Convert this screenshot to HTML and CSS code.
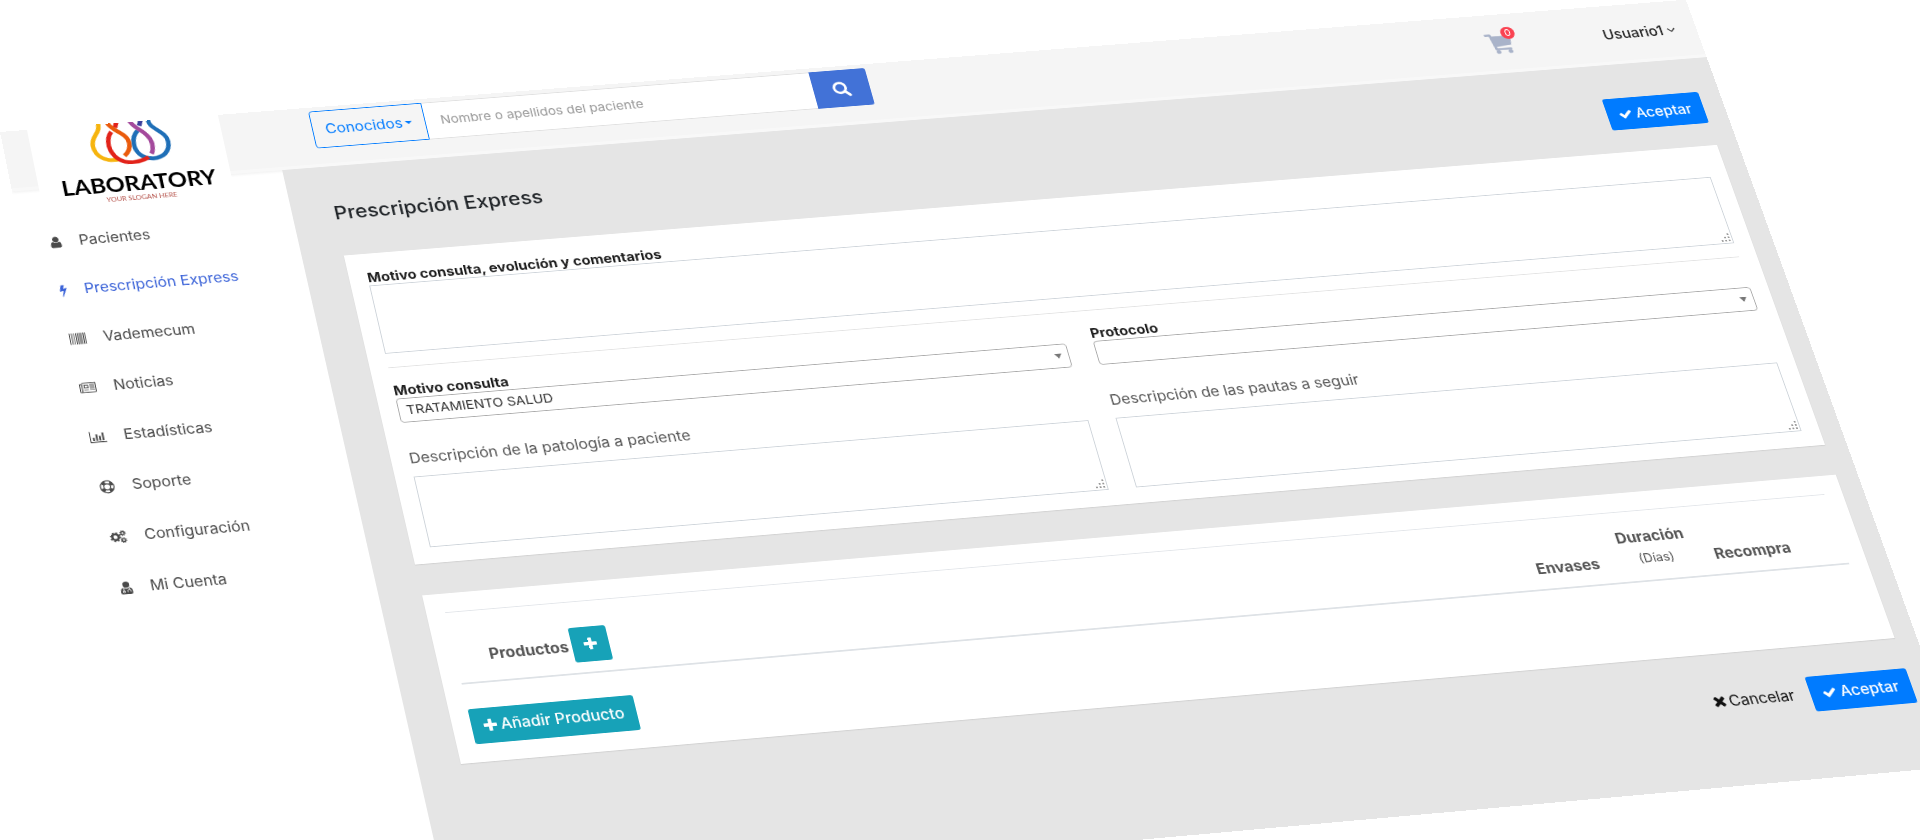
FILE: index.html
```html
<!DOCTYPE html>
<html lang="es">
<head>
    <meta charset="UTF-8">
    <meta name="viewport" content="width=device-width, initial-scale=1.0">
    <title>Prescripción Express</title>
    <link rel="stylesheet" href="styles.css">
</head>
<body>
<!-- iconos -->
<svg class="sprite" aria-hidden="true">
    <symbol id="i-user" viewBox="190 128 1412 1536"><path d="M1536 1399q0 109-62.5 187t-150.5 78h-854q-88 0-150.5-78t-62.5-187q0-85 8.5-160.5t31.5-152 58.5-131 94-89 134.5-34.5q131 128 313 128t313-128q76 0 134.5 34.5t94 89 58.5 131 31.5 152 8.5 160.5zm-256-887q0 159-112.5 271.5t-271.5 112.5-271.5-112.5-112.5-271.5 112.5-271.5 271.5-112.5 271.5 112.5 112.5 271.5z"/></symbol>
    <symbol id="i-bolt" viewBox="440 0 912 1792"><path d="M1333 566q18 20 7 44l-540 1157q-13 25-42 25-4 0-14-2-17-5-25.5-19t-4.5-30l197-808-406 101q-4 1-12 1-18 0-31-11-18-15-13-39l201-825q4-14 16-23t28-9h328q19 0 32 12.5t13 29.5q0 8-5 18l-171 463 396-98q8-2 12-2 19 0 34 15z"/></symbol>
    <symbol id="i-barcode" viewBox="0 0 18 14"><path d="M0 0h1v14H0zM2 0h.6v14H2zM3.6 0h.6v14h-.6zM5.4 0h.6v14h-.6zM7 0h1.2v14H7zM9.2 0h1.2v14H9.2zM11.4 0h1.2v14h-1.2zM13.4 0h.8v14h-.8zM15 0h1.2v14H15zM17.2 0h.8v14h-.8z"/></symbol>
    <symbol id="i-news" viewBox="0 0 20 14"><path fill="none" stroke="currentColor" stroke-width="1.2" d="M3.2 .6h16.2v11.6q0 1.2-1.2 1.2H1.8q-1.2 0-1.2-1.2V2.4h2.6v10q0 1-1.2 1M5.9 3.3h4.3v4H5.9z"/><path d="M5.2 9.4h5.6v1H5.2zM12.3 2.6H18v1h-5.7zM12.3 4.9H18v1h-5.7zM12.3 7.1H18v1h-5.7zM12.3 9.4H18v1h-5.7z"/></symbol>
    <symbol id="i-chart" viewBox="0 0 20 15"><path d="M0 0h1.2v13.7H20V15H0zM3.6 8h2.2v4.6H3.6zM7.4 4h2.2v8.6H7.4zM11.2 6h2.2v6.6h-2.2zM15 2h2.2v10.6H15z"/></symbol>
    <symbol id="i-ring" viewBox="0 0 16 16"><g fill="none" stroke="currentColor"><circle cx="8" cy="8" r="7.3" stroke-width="1.2"/><circle cx="8" cy="8" r="3.6" stroke-width="1.2"/><circle cx="8" cy="8" r="5.5" stroke-width="3.4" stroke-dasharray="4 4.64" stroke-dashoffset="-2.3"/></g></symbol>
    <symbol id="i-cogs" viewBox="0 0 19 16"><g fill="none" stroke="currentColor"><circle cx="6.3" cy="8" r="3.6" stroke-width="2.6"/><circle cx="6.3" cy="8" r="5.3" stroke-width="1.8" stroke-dasharray="2.1 2.06"/><circle cx="15" cy="3.6" r="1.9" stroke-width="1.5"/><circle cx="15" cy="3.6" r="3" stroke-width="1.1" stroke-dasharray="1.2 1.15"/><circle cx="15" cy="12.4" r="1.9" stroke-width="1.5"/><circle cx="15" cy="12.4" r="3" stroke-width="1.1" stroke-dasharray="1.2 1.15"/></g></symbol>
    <symbol id="i-doctor" viewBox="0 0 14 16"><path d="M7 0a3.9 3.9 0 1 1 0 7.8A3.9 3.9 0 0 1 7 0zM3.4 7.6q1.6 1.4 3.6 1.4t3.6-1.4Q14 8.200 14 13.300 14 16 11.600 16H2.400Q0 16 0 13.300 0 8.200 3.400 7.600z"/><g fill="none" stroke="#fff" stroke-width=".9"><path d="M3.800 8.400v3.400M10 8.400v1.800M8.200 13.400v-1.600q0-1.600 1.800-1.600t1.800 1.600v1.600"/><circle cx="3.800" cy="12.900" r="1.100"/></g></symbol>
    <symbol id="i-check" viewBox="110 230 1570 1300"><path d="M1671 566q0 40-28 68l-724 724-136 136q-28 28-68 28t-68-28l-136-136-362-362q-28-28-28-68t28-68l136-136q28-28 68-28t68 28l294 295 656-657q28-28 68-28t68 28l136 136q28 28 28 68z"/></symbol>
    <symbol id="i-times" viewBox="290 366 1210 1200"><path d="M1490 1322q0 40-28 68l-136 136q-28 28-68 28t-68-28l-294-294-294 294q-28 28-68 28t-68-28l-136-136q-28-28-28-68t28-68l294-294-294-294q-28-28-28-68t28-68l136-136q28-28 68-28t68 28l294 294 294-294q28-28 68-28t68 28l136 136q28 28 28 68t-28 68l-294 294 294 294q28 28 28 68z"/></symbol>
    <symbol id="i-plus" viewBox="192 128 1408 1408"><path d="M1600 736v192q0 40-28 68t-68 28h-416v416q0 40-28 68t-68 28h-192q-40 0-68-28t-28-68v-416h-416q-40 0-68-28t-28-68v-192q0-40 28-68t68-28h416v-416q0-40 28-68t68-28h192q40 0 68 28t28 68v416h416q40 0 68 28t28 68z"/></symbol>
    <symbol id="i-search" viewBox="0 0 20 20"><g fill="none" stroke="currentColor" stroke-width="3"><circle cx="8.200" cy="8.200" r="6.500"/><path stroke-linecap="round" stroke-width="3.400" d="M13 13l5 5"/></g></symbol>
    <symbol id="i-cart" viewBox="0 0 30 28"><path d="M0 2.500Q0 1.200 1.300 1.200h5.200q1.200 0 1.500 1.300l.3 1.700H28.500q1.400 0 1.200 1.400l-1.600 9.800q-.2 1.200-1.400 1.300L10.700 18.300l.4 1.900H26.500q1.100 0 1.100 1.300t-1.100 1.300H9.500q-1.100 0-1.300-1.200L5.300 3.900h-4Q0 3.900 0 2.500z"/><circle cx="11.200" cy="25" r="2.600"/><circle cx="25" cy="25" r="2.600"/></symbol>
</svg>

<div class="page">
    <!-- cabecera -->
    <header class="topbar">
        <form class="search">
            <button type="button" class="search-type">Conocidos<span class="caret"></span></button>
            <input type="text" class="search-input" aria-label="Buscar paciente" placeholder="Nombre o apellidos del paciente">
            <button type="button" class="search-btn" aria-label="Buscar"><svg><use href="#i-search"/></svg></button>
        </form>
        <div class="account">
            <a href="#" class="cart" aria-label="Carrito"><svg><use href="#i-cart"/></svg><span class="badge">0</span></a>
            <a href="#" class="user">Usuario1
                <svg viewBox="0 0 10 6"><path fill="none" stroke="currentColor" stroke-width="1.200" d="M1 1l4 4 4-4"/></svg>
            </a>
        </div>
    </header>

    <!-- menú lateral -->
    <aside class="sidebar">
        <div class="logo">
            <svg class="logo-mark" viewBox="0 0 90 54">
                <g fill="none" stroke-width="5" stroke-linecap="butt">
                    <path stroke="#1f6fb7" d="M69 -2C67 12 86 14 86 29C86 42 77 49 66 49C54 49 47 39 48 28C48 21 51 16 55 12"/>
                    <path stroke="#3b3f9b" d="M61 -2L58 6"/>
                    <path stroke="#a44a9c" d="M48 -2C51 10 67 14 68 30C68 36 67 40 65 43"/>
                    <path stroke="#f6b40e" d="M13 -2C15 12 2 14 2.500 28C3 41 13 49 27 47"/>
                    <path stroke="#e2231a" d="M34 -2L31 6"/>
                    <path stroke="#ea5b0c" d="M23 -2C26 11 43 13 43 27C43 34 40 39 35 43"/>
                    <path stroke="#e2231a" d="M26 11C21 16 20 22 20 29C21 43 30 52 43 52C51 52 56 50 61 47"/>
                </g>
            </svg>
            <span class="logo-name">LABORATORY</span>
            <span class="logo-slogan">YOUR SLOGAN HERE</span>
        </div>
        <nav class="menu">
            <a href="#"><svg class="w13"><use href="#i-user"/></svg>Pacientes</a>
            <a href="#" class="active"><svg class="w8"><use href="#i-bolt"/></svg>Prescripción Express</a>
            <a href="#"><svg class="w18"><use href="#i-barcode"/></svg>Vademecum</a>
            <a href="#"><svg class="w18"><use href="#i-news"/></svg>Noticias</a>
            <a href="#"><svg class="w18"><use href="#i-chart"/></svg>Estadísticas</a>
            <a href="#"><svg class="w16"><use href="#i-ring"/></svg>Soporte</a>
            <a href="#"><svg class="w18"><use href="#i-cogs"/></svg>Configuración</a>
            <a href="#"><svg class="w13"><use href="#i-doctor"/></svg>Mi Cuenta</a>
        </nav>
    </aside>

    <!-- contenido -->
    <main class="content">
        <div class="title-row">
            <h1>Prescripción Express</h1>
            <button type="button" class="btn btn-primary"><svg><use href="#i-check"/></svg>Aceptar</button>
        </div>

        <section class="card">
            <label class="label-strong" for="comentarios">Motivo consulta, evolución y comentarios</label>
            <textarea id="comentarios" rows="3"></textarea>
            <hr>
            <div class="columns">
                <div class="column">
                    <label class="label-strong" for="motivo">Motivo consulta</label>
                    <select id="motivo"><option>TRATAMIENTO SALUD</option></select>
                    <label class="label-text" for="patologia">Descripción de la patología a paciente</label>
                    <textarea id="patologia" rows="3"></textarea>
                </div>
                <div class="column">
                    <label class="label-strong" for="protocolo">Protocolo</label>
                    <select id="protocolo"><option></option></select>
                    <label class="label-text" for="pautas">Descripción de las pautas a seguir</label>
                    <textarea id="pautas" rows="3"></textarea>
                </div>
            </div>
        </section>

        <section class="card card-products">
            <table class="products">
                <thead>
                    <tr>
                        <th class="product">Productos <button type="button" class="btn btn-info btn-add" aria-label="Añadir"><svg><use href="#i-plus"/></svg></button></th>
                        <th>Envases</th>
                        <th>Duración<small>(Días)</small></th>
                        <th>Recompra</th>
                        <th class="last"></th>
                    </tr>
                </thead>
            </table>
            <button type="button" class="btn btn-info"><svg><use href="#i-plus"/></svg>Añadir Producto</button>
        </section>

        <div class="actions">
            <button type="button" class="btn btn-link"><svg><use href="#i-times"/></svg>Cancelar</button>
            <button type="button" class="btn btn-primary"><svg><use href="#i-check"/></svg>Aceptar</button>
        </div>
    </main>
</div>
</body>
</html>
```
FILE: styles.css
```css
* { margin: 0; padding: 0; box-sizing: border-box; }
html, body { height: 100%; overflow: hidden; background: #fff; }
body {
    font-family: Inter, "Open Sans", sans-serif;
    font-size: 17px;
    line-height: 24px;
    color: #555;
}
a { text-decoration: none; color: inherit; }
button, input, select, textarea { font: inherit; color: inherit; outline: none; }
button { cursor: pointer; }
svg { fill: currentColor; }
.sprite { display: none; }

/* toda la página en perspectiva */
.page {
    width: 100%;
    min-height: 962px;
    display: grid;
    grid-template-columns: 300px 1fr;
    grid-template-rows: 77px 1fr;
    overflow: hidden;
    transform-origin: 0 0;
    transform: matrix3d(
        0.899182, -0.068902, 0, 0.0000125442,
        0.154555, 0.759196, 0, -0.0000714193,
        0, 0, 1, 0,
        0, 132, 0, 1);
}

/* cabecera */
.topbar {
    grid-area: 1 / 1 / 2 / 3;
    display: flex;
    justify-content: space-between;
    align-items: flex-start;
    padding: 5px 24px 0 343px;
    background: #f5f5f5;
    border-bottom: 4px solid #f8f8f8;
    box-shadow: 0 2px 3px rgba(0, 0, 0, .05);
}
.search { display: flex; height: 48px; }
.search-type {
    width: 127px;
    border: 1px solid #007bff;
    border-radius: 4px 0 0 4px;
    background: transparent;
    color: #007bff;
}
.caret {
    display: inline-block;
    margin-left: 3px;
    vertical-align: 4px;
    border: 4px solid transparent;
    border-top-color: currentColor;
    border-bottom: 0;
}
.search-input {
    width: 438px;
    padding: 0 17px;
    border: 1px solid #e0e0e0;
    border-width: 1px 0;
    background: #fff;
    font-size: 15px;
}
.search-input::placeholder { color: #999; opacity: 1; }
.search-btn {
    width: 64px;
    border: 0;
    border-radius: 0 3px 3px 0;
    background: #4272d7;
    color: #fff;
}
.search-btn svg { width: 20px; height: 20px; vertical-align: middle; }
.account { display: flex; align-items: center; gap: 105px; padding-top: 19px; }
.cart { position: relative; height: 28px; color: #a9b3c9; }
.cart svg { display: block; width: 30px; height: 28px; }
.badge {
    position: absolute;
    top: -7px;
    right: -6px;
    width: 16px;
    height: 16px;
    border-radius: 50%;
    background: #fa4251;
    color: #fff;
    font-size: 12px;
    line-height: 16px;
    text-align: center;
}
.user { font-weight: 500; color: #222; }
.user svg { width: 10px; height: 6px; vertical-align: 3px; }

/* menú lateral */
.sidebar { grid-area: 1 / 1 / 3 / 2; position: relative; }
.logo {
    display: flex;
    flex-direction: column;
    align-items: center;
    height: 115px;
    margin: 0 57px 0 30px;
    padding-left: 8px;
    background: #fff;
}
.logo-mark { width: 90px; height: 54px; margin-bottom: 10px; }
.logo-name {
    font-family: Lato, sans-serif;
    font-size: 26px;
    font-weight: 700;
    line-height: 28px;
    color: #000;
}
.logo-slogan {
    font-family: Lato, sans-serif;
    font-size: 8px;
    line-height: 10px;
    color: #b5524a;
}
.menu a {
    display: flex;
    align-items: center;
    gap: 19px;
    padding: 18px 0 18px 30px;
    line-height: 25px;
    color: #4a4a4a;
}
.menu svg { width: 18px; height: 17px; }
.menu .w8 { width: 8px; }
.menu .w13 { width: 13px; }
.menu .w16 { width: 16px; }
.menu .active { color: #3b63d8; }

/* contenido */
.content {
    grid-area: 2 / 2 / 3 / 3;
    padding: 44px 24px 77px 46px;
    background: #e5e5e5;
}
.title-row {
    display: flex;
    justify-content: space-between;
    align-items: flex-start;
    margin-bottom: 29px;
}
h1 {
    font-size: 23px;
    font-weight: 500;
    line-height: 32px;
    color: #212529;
}
.btn {
    display: inline-flex;
    align-items: center;
    justify-content: center;
    gap: 4px;
    height: 41px;
    padding: 0 13px;
    border: 0;
    border-radius: 3px;
    font-size: 17px;
    font-weight: 500;
    color: #fff;
}
.btn svg { width: 14px; height: 14px; }
.btn-primary { gap: 5px; padding: 0 14px; background: #007bff; }
.btn-info { background: #17a2b8; }
.btn-link { background: transparent; color: #111; font-weight: 400; }
.btn-link svg { width: 12px; height: 12px; }
.btn-add { width: 40px; }

.card {
    padding: 20px 20px 19px;
    background: #fff;
    box-shadow: 0 1px 1px rgba(0, 0, 0, .08);
}
.card label { display: block; }
.card .label-strong {
    font-size: 16px;
    font-weight: 700;
    line-height: 20px;
    color: #1d1d1d;
}
.label-text { margin: 32px 0 10px; }
textarea {
    display: block;
    width: 100%;
    padding: 6px 12px;
    border: 1px solid #ced4da;
    resize: none;
    background: #fff url("data:image/svg+xml,%3Csvg xmlns='http://www.w3.org/2000/svg' width='12' height='12' fill='%23999'%3E%3Cpath d='M8 0h2v2H8zM8 4h2v2H8zM4 4h2v2H4zM8 8h2v2H8zM4 8h2v2H4zM0 8h2v2H0z'/%3E%3C/svg%3E") no-repeat right 0 bottom 0;
}
hr { margin: 17px 0 18px; border: 0; border-top: 1px solid #e3e3e3; }
.columns { display: flex; gap: 30px; }
.column { flex: 1; min-width: 0; }
select {
    display: block;
    width: 100%;
    height: 30px;
    padding: 0 8px;
    appearance: none;
    border: 1px solid #aaa;
    border-radius: 4px;
    color: #333;
    background: #fff url("data:image/svg+xml,%3Csvg xmlns='http://www.w3.org/2000/svg' width='8' height='6' fill='%23777'%3E%3Cpath d='M0 0h8L4 6z'/%3E%3C/svg%3E") no-repeat right 7px center;
}
.column select { font-size: 15px; }

/* productos */
.card-products { margin-top: 37px; padding: 22px 20px 21px; }
.products {
    width: 100%;
    margin-bottom: 29px;
    border-collapse: collapse;
    border-top: 1px solid #e3e6ea;
    border-bottom: 2px solid #dee2e6;
}
.products th {
    height: 84px;
    padding: 12px 13px;
    vertical-align: bottom;
    text-align: center;
    white-space: nowrap;
}
.products .product {
    width: 100%;
    padding: 12px 36px;
    text-align: left;
}
.products .last { padding: 0 22px; }
.products small {
    display: block;
    font-size: 14px;
    font-weight: 400;
    line-height: 28px;
}
.actions {
    display: flex;
    justify-content: flex-end;
    gap: 4px;
    margin-top: 36px;
}
```
